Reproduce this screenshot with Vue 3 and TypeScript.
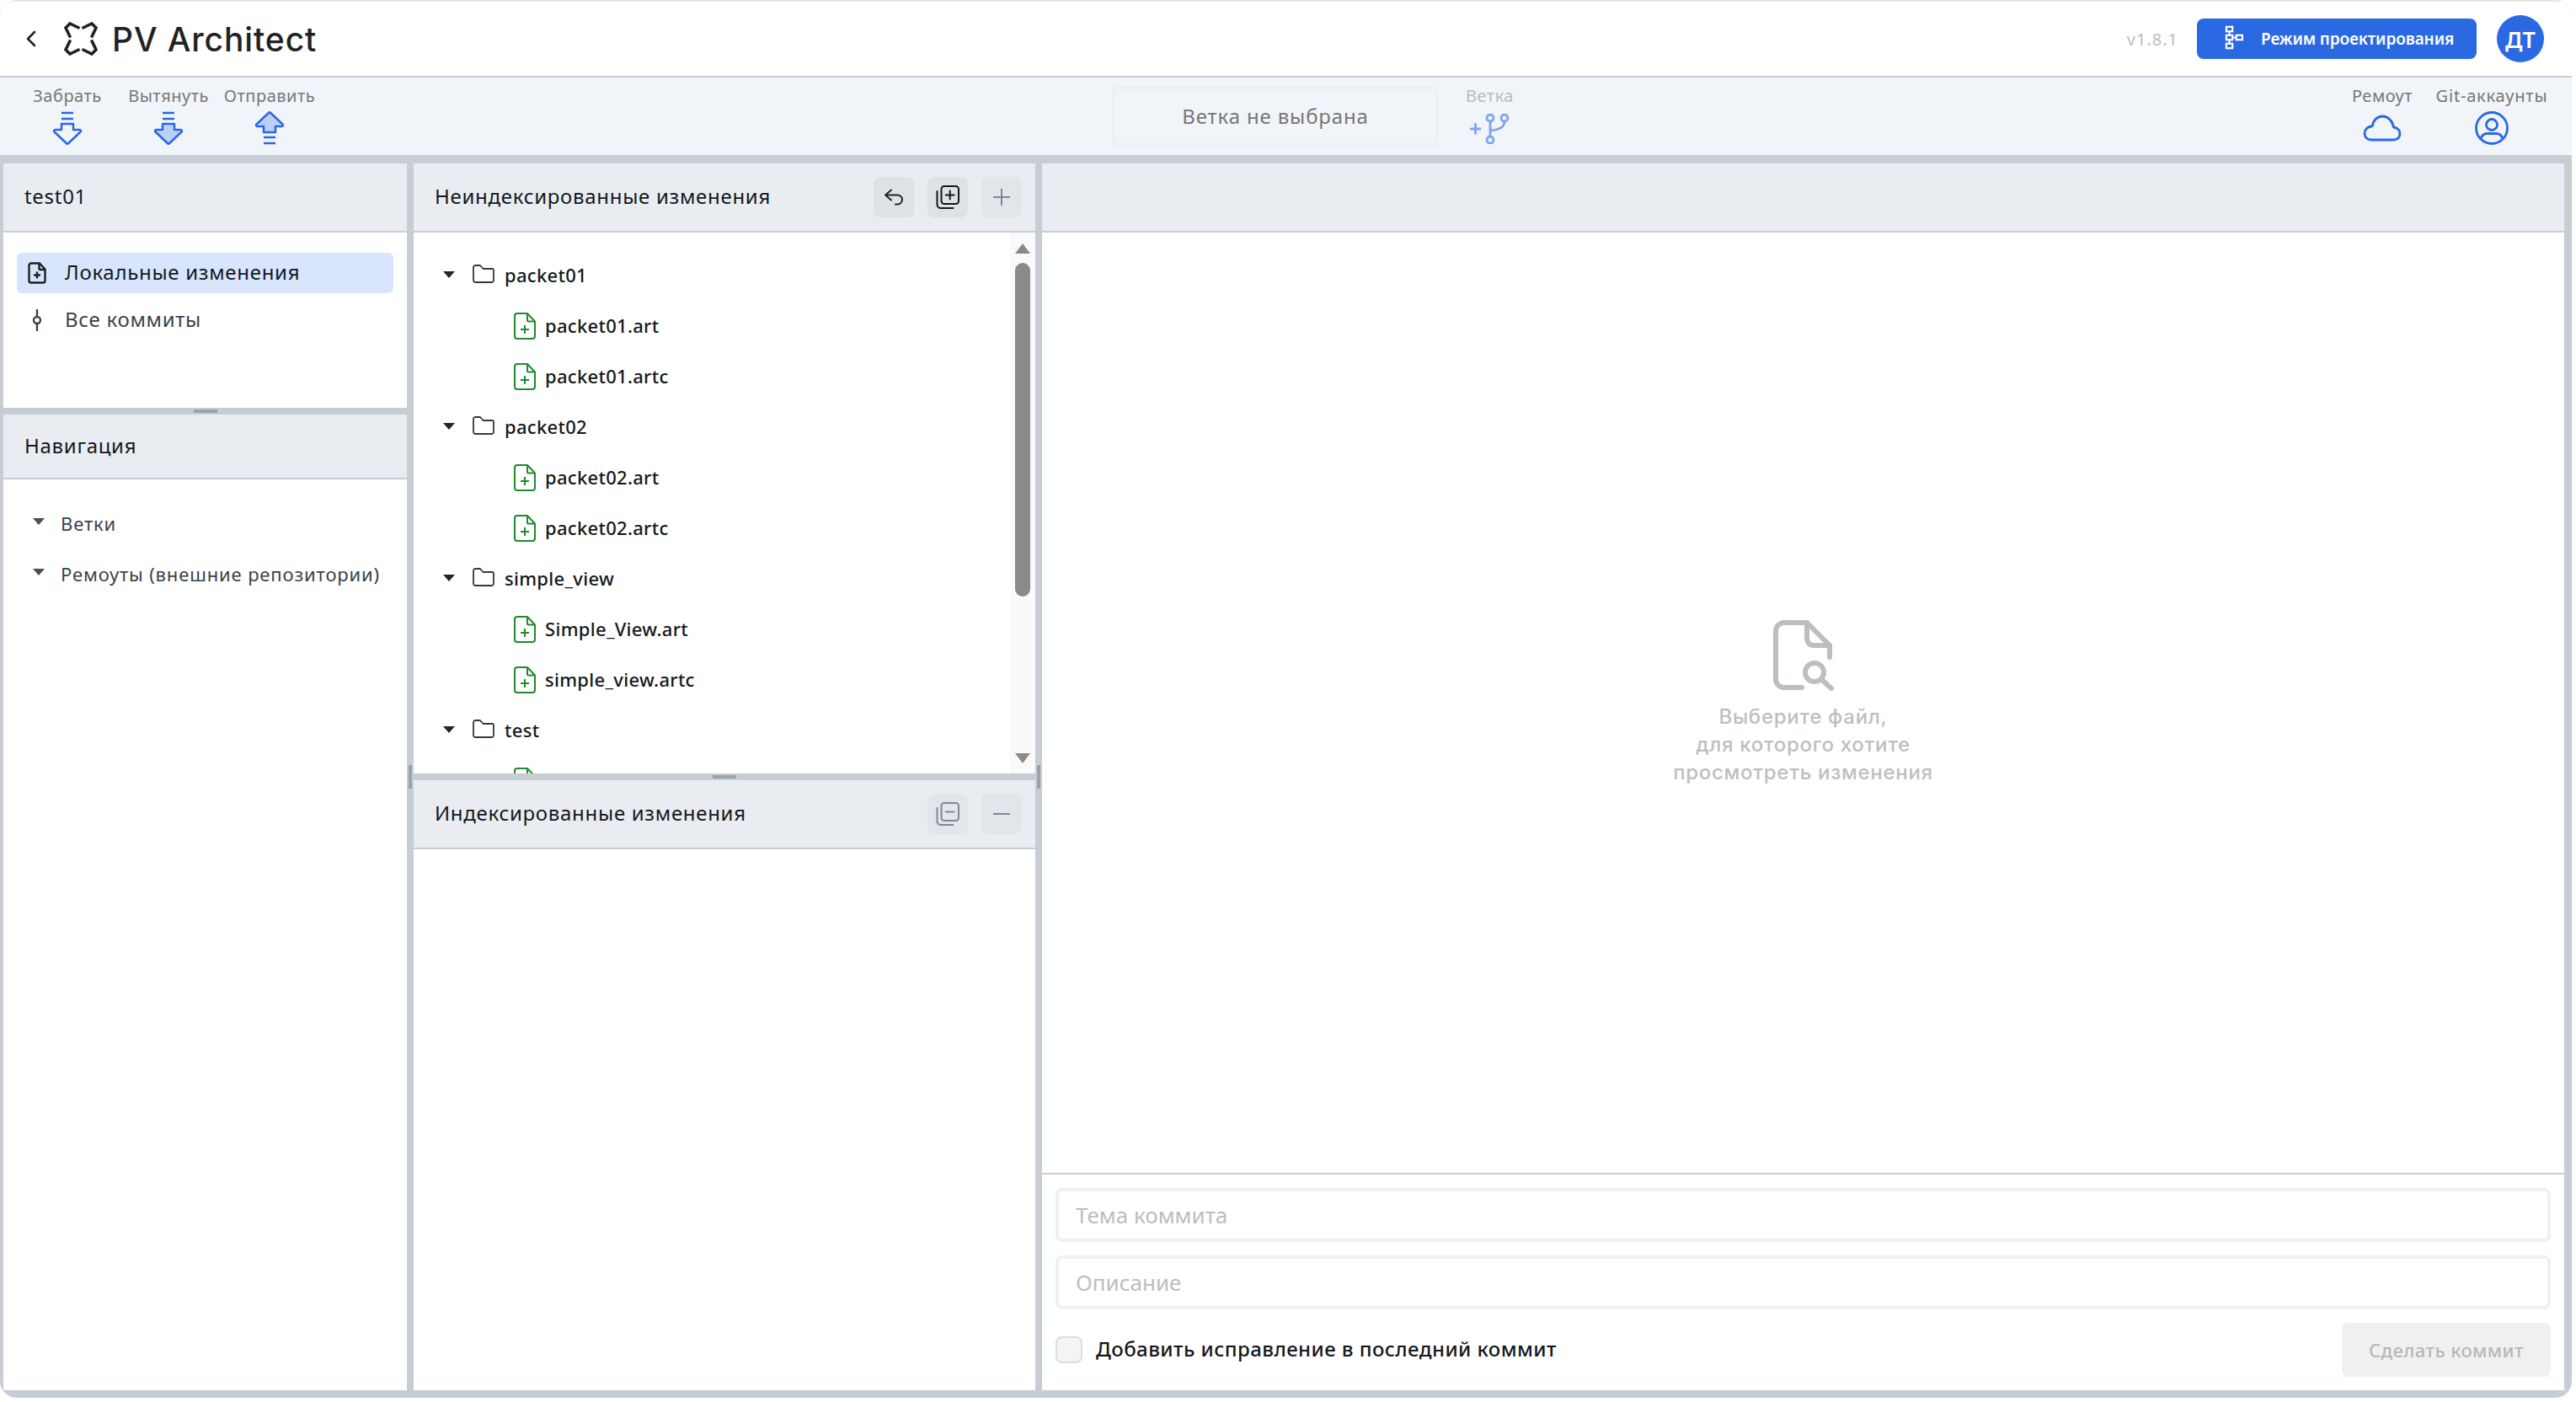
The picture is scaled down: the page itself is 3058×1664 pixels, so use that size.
<script setup lang="ts">
interface TreeRow {
  name: string;
  folder: boolean;
}

// the last row is scrolled away, only the top of its icon shows
const tree: TreeRow[] = [
  { name: 'packet01', folder: true },
  { name: 'packet01.art', folder: false },
  { name: 'packet01.artc', folder: false },
  { name: 'packet02', folder: true },
  { name: 'packet02.art', folder: false },
  { name: 'packet02.artc', folder: false },
  { name: 'simple_view', folder: true },
  { name: 'Simple_View.art', folder: false },
  { name: 'simple_view.artc', folder: false },
  { name: 'test', folder: true },
  { name: '', folder: false },
];
</script>

<template>
  <div class="window">
    <header class="topbar">
      <svg class="back" viewBox="0 0 14 20" fill="none" stroke="#222" stroke-width="2.6" stroke-linecap="round" stroke-linejoin="round">
        <path d="M11 2 3 10l8 8" />
      </svg>
      <svg class="logo" viewBox="0 0 40 40" fill="none" stroke="#222" stroke-width="3.6" stroke-linejoin="miter">
        <path d="M18.5 7.500 7 2 2 7l5.500 11.500M21.500 7.500 33 2l5 5-5.500 11.500M21.500 32.500 33 38l5-5-5.500-11.500M18.500 32.500 7 38l-5-5 5.500-11.500" />
      </svg>
      <span class="brand">PV Architect</span>
      <div class="topbar-right">
        <span class="version">v1.8.1</span>
        <button class="mode-btn">
          <svg viewBox="0 0 24 32" fill="none" stroke="#fff" stroke-width="2.4">
            <rect x="2" y="2" width="8" height="6" />
            <rect x="2" y="13" width="8" height="6" />
            <rect x="2" y="24" width="8" height="6" />
            <rect x="15" y="13" width="8" height="6" />
            <path d="M6 8v5M6 19v5M10 16h5" />
          </svg>
          <span>Режим проектирования</span>
        </button>
        <div class="avatar">ДТ</div>
      </div>
    </header>

    <div class="toolbar">
      <div class="tool-group">
        <div class="tool tool-sync">
          <span>Забрать</span>
          <svg class="tool-icon" viewBox="0 0 36 40" fill="none" stroke="#2b69e3" stroke-width="2.5" stroke-linejoin="round">
            <path d="M11 2h14M11 9h14" />
            <path d="M11 15h14v7h7.500c1.300 0 2 1.500 1 2.500L19.200 38a1.700 1.700 0 0 1-2.400 0L2.500 24.500c-1-1-.3-2.500 1-2.500H11z" />
          </svg>
        </div>
        <div class="tool tool-sync">
          <span>Вытянуть</span>
          <svg class="tool-icon" viewBox="0 0 36 40" fill="none" stroke="#2b69e3" stroke-width="2.5" stroke-linejoin="round">
            <path d="M11 2h14M11 9h14" />
            <path fill="#bcd0f3" d="M11 15h14v7h7.500c1.300 0 2 1.500 1 2.500L19.200 38a1.700 1.700 0 0 1-2.400 0L2.500 24.500c-1-1-.3-2.500 1-2.500H11z" />
          </svg>
        </div>
        <div class="tool tool-sync">
          <span>Отправить</span>
          <svg class="tool-icon" viewBox="0 0 36 40" fill="none" stroke="#2b69e3" stroke-width="2.5" stroke-linejoin="round">
            <path d="M11 38h14M11 31h14" />
            <path fill="#bcd0f3" d="M11 25h14v-7h7.500c1.300 0 2-1.500 1-2.500L19.200 2a1.700 1.700 0 0 0-2.400 0L2.500 15.500c-1 1-.3 2.500 1 2.500H11z" />
          </svg>
        </div>
      </div>

      <div class="branch-group">
        <div class="branch-box"><span>Ветка не выбрана</span></div>
        <div class="tool tool-branch">
          <span>Ветка</span>
          <svg class="branch-icon" viewBox="0 0 48 36" fill="none" stroke="#7fa5ee" stroke-width="2.8" stroke-linecap="round">
            <path d="M1 18h11M6.500 12.500v11" />
            <circle cx="24" cy="5" r="4" />
            <circle cx="41" cy="5" r="4" />
            <circle cx="24" cy="31" r="4" />
            <path d="M24 9v18M41 9c0 6-4 10-17 11" />
          </svg>
        </div>
      </div>

      <div class="tool-group tool-group-right">
        <div class="tool tool-remote">
          <span>Ремоут</span>
          <svg class="tool-icon" viewBox="0 0 46 40" fill="none" stroke="#2b69e3" stroke-width="2.8" stroke-linejoin="round">
            <path d="M10 34h26c5 0 8-3 8-7.500 0-4-3-7-7.500-7.500C35 11 29.500 6 23.500 6 17 6 12 11 11.500 17.500 5 18.500 2 22 2 26.500 2 31 5.500 34 10 34z" />
          </svg>
        </div>
        <div class="tool tool-account">
          <span>Git-аккаунты</span>
          <svg class="tool-icon" viewBox="0 0 40 40" fill="none" stroke="#2b69e3" stroke-width="2.8">
            <circle cx="20" cy="20" r="18.5" />
            <circle cx="20" cy="16" r="6.5" />
            <path d="M7.500 32c1-3.500 3.500-5.500 7-5.500h11c3.500 0 6 2 7 5.500" />
          </svg>
        </div>
      </div>
    </div>

    <main class="workspace">
      <section class="column col-left">
        <div class="panel panel-repo">
          <div class="panel-head"><span class="panel-title">test01</span></div>
          <div class="repo-body">
            <div class="repo-item active">
              <svg viewBox="0 0 22 26" fill="none" stroke="#1c2127" stroke-width="2.4" stroke-linejoin="round">
                <path d="M4 1.500h10l6.500 7V22a2.500 2.500 0 0 1-2.500 2.500H4A2.500 2.500 0 0 1 1.500 22V4A2.500 2.500 0 0 1 4 1.500z" />
                <path d="M13.500 1.500V8a1 1 0 0 0 1 1h6M11 11.500v8M7 15.500h8" />
              </svg>
              <span>Локальные изменения</span>
            </div>
            <div class="repo-item">
              <svg viewBox="0 0 22 26" fill="none" stroke="#3c434b" stroke-width="2.4" stroke-linecap="round">
                <circle cx="11" cy="13" r="4" />
                <path d="M11 1v8M11 17v8" />
              </svg>
              <span>Все коммиты</span>
            </div>
          </div>
          <i class="grip grip-h"></i>
        </div>
        <div class="panel panel-nav">
          <div class="panel-head"><span class="panel-title">Навигация</span></div>
          <div class="nav-body">
            <div class="nav-row"><i class="caret caret-gray"></i><span>Ветки</span></div>
            <div class="nav-row"><i class="caret caret-gray"></i><span>Ремоуты (внешние репозитории)</span></div>
          </div>
        </div>
      </section>

      <section class="column col-changes">
        <div class="panel panel-unstaged">
          <div class="panel-head">
            <span class="panel-title">Неиндексированные изменения</span>
            <div class="head-actions">
              <button class="head-btn">
                <svg class="icon-undo" viewBox="0 0 24 20" fill="none" stroke="#1f2429" stroke-width="2" stroke-linecap="round" stroke-linejoin="round">
                  <path d="M9 1.500 2 7.500l7 6M2 7.500h14.500a5.500 5.500 0 0 1 5.500 5.500 5.500 5.500 0 0 1-5.500 5.500H14" />
                </svg>
              </button>
              <button class="head-btn">
                <svg class="icon-stack" viewBox="0 0 28 28" fill="none" stroke="#14181d" stroke-width="2" stroke-linecap="round" stroke-linejoin="round">
                  <rect x="6.500" y="1" width="20.500" height="21" rx="3.500" />
                  <path d="M16.700 6.500v10M11.700 11.500h10M1.500 7v15.500A4.500 4.500 0 0 0 6 27h14.500" />
                </svg>
              </button>
              <button class="head-btn head-btn-faint">
                <svg class="icon-line" viewBox="0 0 22 22" fill="none" stroke="#80878f" stroke-width="2"><path d="M11 1v20M1 11h20" /></svg>
              </button>
            </div>
          </div>
          <div class="tree-body">
            <div v-for="(row, i) in tree" :key="i" class="tree-row" :class="{ 'tree-file': !row.folder }">
              <template v-if="row.folder">
                <i class="caret"></i>
                <svg class="folder-icon" viewBox="0 0 26 22" fill="none" stroke="#33383e" stroke-width="1.8" stroke-linejoin="round">
                  <path d="M1 3.500A2.500 2.500 0 0 1 3.500 1h5.500l3.500 4h11A1.500 1.500 0 0 1 25 6.500v12a2.500 2.500 0 0 1-2.500 2.500h-19A2.500 2.500 0 0 1 1 18.500z" />
                </svg>
              </template>
              <svg v-else class="file-icon" viewBox="0 0 26 32" fill="none" stroke="#1f8a2f" stroke-width="2" stroke-linejoin="round">
                <path d="M4 1h12l9 9.500V28a3 3 0 0 1-3 3H4a3 3 0 0 1-3-3V4a3 3 0 0 1 3-3z" />
                <path d="M16 1v8a1.500 1.500 0 0 0 1.500 1.500H25M13 15v10M8 20h10" />
              </svg>
              <span v-if="row.name">{{ row.name }}</span>
            </div>
            <div class="scrollbar">
              <i class="scroll-up"></i>
              <i class="scroll-thumb"></i>
              <i class="scroll-down"></i>
            </div>
          </div>
          <i class="grip grip-h"></i>
        </div>
        <div class="panel panel-staged">
          <div class="panel-head">
            <span class="panel-title">Индексированные изменения</span>
            <div class="head-actions">
              <button class="head-btn head-btn-faint">
                <svg class="icon-stack" viewBox="0 0 28 28" fill="none" stroke="#80878f" stroke-width="2" stroke-linecap="round" stroke-linejoin="round">
                  <rect x="6.500" y="1" width="20.500" height="21" rx="3.500" />
                  <path d="M11.700 11.500h10M1.500 7v15.500A4.500 4.500 0 0 0 6 27h14.500" />
                </svg>
              </button>
              <button class="head-btn head-btn-faint">
                <svg class="icon-line" viewBox="0 0 22 22" fill="none" stroke="#80878f" stroke-width="2"><path d="M1 11h20" /></svg>
              </button>
            </div>
          </div>
        </div>
        <i class="grip grip-v grip-left"></i>
        <i class="grip grip-v grip-right"></i>
      </section>

      <section class="column col-diff">
        <div class="panel panel-diff">
          <div class="panel-head"></div>
          <div class="empty-state">
            <svg viewBox="0 0 72 84" fill="none" stroke="#bcbfc2" stroke-width="6" stroke-linecap="round" stroke-linejoin="round">
              <path d="M34 80H13A10 10 0 0 1 3 70V13A10 10 0 0 1 13 3h27l27 27v14" />
              <path d="M40 3v19a8 8 0 0 0 8 8h19" />
              <circle cx="49" cy="62" r="11" />
              <path d="m57 70 12 11" />
            </svg>
            <p>Выберите файл,<br />для которого хотите<br />просмотреть изменения</p>
          </div>
          <div class="commit-form">
            <div class="commit-input">Тема коммита</div>
            <div class="commit-input">Описание</div>
            <div class="commit-footer">
              <label class="amend">
                <i class="checkbox"></i>
                <span>Добавить исправление в последний коммит</span>
              </label>
              <button class="commit-btn">Сделать коммит</button>
            </div>
          </div>
        </div>
      </section>
    </main>
  </div>
</template>

<style>
html,
body {
  margin: 0;
  background: #fff;
}
</style>

<style scoped>
* {
  box-sizing: border-box;
}

.window {
  width: 3053px;
  height: 1659px;
  display: flex;
  flex-direction: column;
  overflow: hidden;
  border-radius: 20px;
  background: #c6cdd5;
  font-family: 'Noto Sans', 'Liberation Sans', sans-serif;
  color: #14181d;
}

.topbar {
  flex: none;
  height: 92px;
  display: flex;
  align-items: center;
  padding-left: 30px;
  padding-right: 33px;
  background: #fff;
  border-top: 2px solid #e6e6e6;
  border-bottom: 2px solid #c6cdd5;
}

.back {
  width: 14px;
  height: 20px;
}

.logo {
  width: 40px;
  height: 40px;
  margin-left: 32px;
}

.brand {
  margin-left: 17px;
  font-family: Inter, sans-serif;
  font-size: 39px;
  font-weight: 500;
  letter-spacing: 0.9px;
  color: #222;
}

.topbar-right {
  margin-left: auto;
  display: flex;
  align-items: center;
}

.version {
  font-size: 20px;
  letter-spacing: 1px;
  color: #bdbdbd;
  margin-right: 22px;
}

.mode-btn {
  width: 332px;
  height: 48px;
  display: flex;
  align-items: center;
  padding: 0 0 0 33px;
  border: 0;
  border-radius: 8px;
  background: #2b69e3;
  color: #fff;
  font-family: inherit;
  font-size: 19px;
  font-weight: 600;
  letter-spacing: -0.1px;
}

.mode-btn svg {
  width: 22px;
  height: 29px;
  margin-top: -4px;
  margin-right: 21px;
}

.avatar {
  width: 56px;
  height: 56px;
  margin-left: 24px;
  display: flex;
  align-items: center;
  justify-content: center;
  border-radius: 50%;
  background: #2b69e3;
  color: #fff;
  font-size: 27px;
  font-weight: 600;
}

.toolbar {
  flex: none;
  height: 92px;
  display: grid;
  grid-template-columns: 1fr auto 1fr;
  align-items: center;
  background: #f1f4f8;
}

.tool-group {
  display: flex;
  height: 100%;
  padding-left: 20px;
}

.tool-group-right {
  justify-content: flex-end;
  padding-left: 0;
  padding-right: 27px;
}

.tool {
  display: flex;
  flex-direction: column;
  align-items: center;
  padding-top: 10px;
  font-size: 20px;
  line-height: 24px;
  letter-spacing: 0.5px;
  color: #777;
  white-space: nowrap;
}

.tool-sync {
  width: 120px;
}

.tool-icon {
  width: 36px;
  height: 40px;
  margin-top: 6px;
}

.tool-remote {
  width: 124px;
}

.tool-remote .tool-icon {
  width: 46px;
}

.tool-account {
  width: 136px;
  letter-spacing: 0.8px;
}

.tool-account .tool-icon {
  width: 40px;
}

.branch-group {
  display: flex;
  height: 100%;
  align-items: center;
  margin-left: 64px;
}

.branch-box {
  width: 388px;
  height: 72px;
  display: flex;
  align-items: center;
  justify-content: center;
  border: 4px solid #ecf0f4;
  border-radius: 8px;
  font-size: 24px;
  letter-spacing: 0.85px;
  color: #777;
}

.branch-box span {
  margin-top: -2px;
}

.tool-branch {
  height: 100%;
  margin-left: 32px;
  color: #bbb;
}

.branch-icon {
  width: 48px;
  height: 36px;
  margin-top: 9px;
}

.workspace {
  flex: 1;
  min-height: 0;
  display: flex;
  gap: 8px;
  padding: 10px 9px 9px 4px;
}

.column {
  position: relative;
  display: flex;
  flex-direction: column;
  gap: 8px;
  min-height: 0;
}

.col-left {
  flex: none;
  width: 479px;
}

.col-changes {
  flex: none;
  width: 738px;
}

.col-diff {
  flex: 1;
  min-width: 0;
}

.panel {
  position: relative;
  display: flex;
  flex-direction: column;
  min-height: 0;
  background: #fff;
}

.panel-repo {
  flex: none;
  height: 290px;
}

.panel-nav,
.panel-staged,
.panel-diff {
  flex: 1;
}

.panel-unstaged {
  flex: none;
  height: 724px;
}

.panel-head {
  flex: none;
  height: 82px;
  display: flex;
  align-items: center;
  justify-content: space-between;
  padding: 0 16px 0 25px;
  background: #e9edf1;
  border-bottom: 2px solid #c6cdd5;
}

.panel-nav .panel-head {
  height: 77px;
}

.panel-title {
  margin-top: -3px;
  font-size: 24px;
  letter-spacing: 0.7px;
  color: #14181d;
}

.repo-body {
  padding: 24px 16px 0;
}

.repo-item {
  height: 48px;
  display: flex;
  align-items: center;
  padding-left: 13px;
  border-radius: 6px;
  font-size: 24px;
  letter-spacing: 0.7px;
  color: #3b4249;
}

.repo-item span {
  margin-top: -3px;
}

.repo-item + .repo-item {
  margin-top: 8px;
}

.repo-item.active {
  background: #d9e5fd;
  color: #14181d;
}

.repo-item svg {
  width: 22px;
  height: 26px;
  margin-right: 22px;
}

.nav-body {
  padding-top: 23px;
}

.nav-row {
  height: 60px;
  display: flex;
  align-items: center;
  padding-left: 35px;
  font-size: 22px;
  letter-spacing: 0.85px;
  color: #3b4249;
}

.nav-row span {
  margin-left: 19px;
  margin-top: -3px;
}

.nav-row .caret {
  margin-top: -6px;
}

.caret {
  flex: none;
  width: 0;
  height: 0;
  border-left: 7.5px solid transparent;
  border-right: 7.5px solid transparent;
  border-top: 8px solid #22262b;
}

.caret-gray {
  border-top-color: #4a4f56;
}

.tree-body {
  position: relative;
  flex: 1;
  min-height: 0;
  overflow: hidden;
  padding-top: 21px;
}

.tree-row {
  height: 60px;
  display: flex;
  align-items: center;
  padding-left: 35px;
  font-size: 22px;
  font-weight: 500;
  letter-spacing: 0.3px;
  color: #14181d;
}

.tree-row span {
  margin-top: -2px;
}

.tree-row .caret {
  margin-top: -3px;
}

.folder-icon {
  width: 26px;
  height: 22px;
  margin-left: 21px;
  margin-top: -4px;
}

.tree-row:not(.tree-file) span {
  margin-left: 12px;
}

.tree-file {
  padding-left: 119px;
}

.file-icon {
  width: 26px;
  height: 32px;
}

.tree-file span {
  margin-left: 11px;
}

.scrollbar {
  position: absolute;
  top: 0;
  right: 0;
  bottom: 0;
  width: 30px;
  background: #fafafa;
}

.scrollbar i {
  position: absolute;
  display: block;
}

.scroll-up,
.scroll-down {
  left: 6px;
  width: 0;
  height: 0;
  border-left: 9px solid transparent;
  border-right: 9px solid transparent;
}

.scroll-up {
  top: 13px;
  border-bottom: 12px solid #8a8a8a;
}

.scroll-down {
  bottom: 12px;
  border-top: 12px solid #8a8a8a;
}

.scroll-thumb {
  top: 36px;
  left: 6px;
  width: 18px;
  height: 396px;
  border-radius: 9px;
  background: #8a8a8a;
}

.grip {
  position: absolute;
  display: block;
  background: #9aa2aa;
}

.grip-h {
  left: 50%;
  bottom: -6px;
  width: 28px;
  height: 4px;
  margin-left: -14px;
}

.grip-v {
  top: 714px;
  width: 4px;
  height: 28px;
}

.grip-left {
  left: -6px;
}

.grip-right {
  right: -6px;
}

.head-actions {
  display: flex;
  gap: 16px;
}

.head-btn {
  width: 48px;
  height: 48px;
  display: flex;
  align-items: center;
  justify-content: center;
  padding: 0;
  border: 0;
  border-radius: 8px;
  background: #dde2e7;
}

.head-btn-faint {
  background: #e1e6ea;
}

.icon-undo {
  width: 24px;
  height: 20px;
}

.icon-stack {
  width: 28px;
  height: 28px;
}

.icon-line {
  width: 22px;
  height: 22px;
}

.empty-state {
  flex: 1;
  display: flex;
  flex-direction: column;
  align-items: center;
  justify-content: center;
  color: #bcbfc2;
}

.empty-state svg {
  width: 72px;
  height: 84px;
}

.empty-state p {
  margin: 14px 0 0;
  font-family: Inter, sans-serif;
  font-size: 24px;
  font-weight: 500;
  letter-spacing: 0.7px;
  line-height: 33px;
  text-align: center;
}

.commit-form {
  flex: none;
  height: 258px;
  padding: 16px 16px 0;
  border-top: 2px solid #c6cdd5;
}

.commit-input {
  height: 64px;
  display: flex;
  align-items: center;
  padding-left: 20px;
  margin-bottom: 16px;
  border: 4px solid #f0f0f0;
  border-radius: 8px;
  font-size: 26px;
  color: #bdbdbd;
}

.commit-footer {
  display: flex;
  align-items: center;
  justify-content: space-between;
}

.amend {
  display: flex;
  align-items: center;
  font-size: 24px;
  font-weight: 500;
  letter-spacing: 0.43px;
  color: #14181d;
}

.amend span {
  margin-top: -3px;
}

.checkbox {
  width: 32px;
  height: 32px;
  margin-right: 16px;
  background: #f4f4f4;
  border: 2px solid #dcdcdc;
  border-radius: 8px;
}

.commit-btn {
  width: 248px;
  height: 64px;
  border: 0;
  border-radius: 8px;
  background: #f0f0f0;
  color: #b5b8ba;
  font-family: inherit;
  font-size: 22px;
  font-weight: 500;
  letter-spacing: 0.4px;
}
</style>
